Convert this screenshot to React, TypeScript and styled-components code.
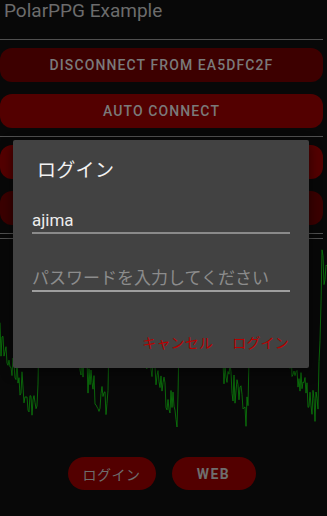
import styled, { createGlobalStyle } from "styled-components";

const GlobalStyle = createGlobalStyle`
  html, body {
    margin: 0;
    padding: 0;
    background: #080808;
  }
  body {
    width: 327px;
    height: 516px;
    overflow: hidden;
    font-family: Roboto, "Noto Sans CJK JP", sans-serif;
  }
`;

const JP = `Roboto, "Noto Sans CJK JP", sans-serif`;

function rand(seed: number) {
  let s = seed;
  return () => {
    s = (s * 16807) % 2147483647;
    return (s - 1) / 2147483646;
  };
}

// PPG-like trace: sharp rise after each trough, then a noisy decay
function buildWave(width: number) {
  const r = rand(7);
  const period = 70.3;
  const trough = 37;
  const peakY = 20;
  const lowY = 174;
  const pts: string[] = [];
  for (let x = 0; x <= width; x += 1) {
    const p = ((((x - trough) % period) + period) % period) / period;
    let y: number;
    if (p < 0.05) {
      y = lowY - (lowY - peakY) * (p / 0.05);
    } else {
      y = peakY + (lowY - peakY) * Math.pow((p - 0.05) / 0.95, 0.8);
    }
    y += (r() - 0.5) * 34;
    pts.push(`${x.toFixed(1)},${y.toFixed(1)}`);
  }
  return "M" + pts.join(" L");
}

const WAVE = buildWave(327);

export default function App() {
  return (
    <>
      <GlobalStyle />
      <Screen>
        <AppTitle>PolarPPG Example</AppTitle>
        <Divider />
        <ButtonStack>
          <WideButton shade="#3d0000">DISCONNECT FROM EA5DFC2F</WideButton>
          <WideButton shade="#530000">AUTO CONNECT</WideButton>
        </ButtonStack>
        <Divider />
        <ButtonStack>
          <WideButton shade="#530000">START PPG</WideButton>
          <WideButton shade="#3a0000">START ACC</WideButton>
        </ButtonStack>
        <Divider />
        <Divider $gap={4} />
        <Graph viewBox="0 0 327 208" width={327} height={208}>
          <path d={WAVE} fill="none" stroke="#0b7e0b" strokeWidth={0.8} />
        </Graph>
        <BottomRow>
          <PillButton>ログイン</PillButton>
          <PillButton $wide>WEB</PillButton>
        </BottomRow>

        <Dialog>
          <DialogTitle>ログイン</DialogTitle>
          <Field readOnly value="ajima" />
          <Field readOnly placeholder="パスワードを入力してください" $gap={32} $light />
          <Actions>
            <TextButton>キャンセル</TextButton>
            <TextButton>ログイン</TextButton>
          </Actions>
        </Dialog>
      </Screen>
    </>
  );
}

const Screen = styled.div`
  position: relative;
  width: 327px;
  height: 516px;
  display: flex;
  flex-direction: column;
  background: #080808;
`;

const AppTitle = styled.h1`
  margin: 0;
  height: 39px;
  padding: 1px 0 0 4px;
  box-sizing: border-box;
  font-family: Roboto, sans-serif;
  font-weight: 400;
  font-size: 19px;
  line-height: 20px;
  color: #6c6c6c;
`;

const Divider = styled.div<{ $gap?: number }>`
  width: 323px;
  height: 1px;
  margin-top: ${({ $gap }) => $gap ?? 0}px;
  background: #4f4f4f;
`;

const ButtonStack = styled.div`
  width: 323px;
  display: flex;
  flex-direction: column;
  gap: 12px;
  padding: 8px 0;
`;

const WideButton = styled.div<{ shade: string }>`
  height: 34px;
  border-radius: 12px;
  background: ${({ shade }) => shade};
  display: flex;
  justify-content: center;
  align-items: center;
  font-family: Roboto, sans-serif;
  font-weight: 500;
  font-size: 14px;
  letter-spacing: 1.1px;
  color: #7a7a7a;
`;

const Graph = styled.svg`
  display: block;
`;

const BottomRow = styled.div`
  width: 323px;
  display: flex;
  justify-content: center;
  gap: 16px;
  margin-top: 10px;
`;

const PillButton = styled.div<{ $wide?: boolean }>`
  height: 33px;
  width: ${({ $wide }) => ($wide ? 84 : 88)}px;
  border-radius: 17px;
  background: #530000;
  display: flex;
  justify-content: center;
  align-items: center;
  font-family: ${JP};
  font-weight: ${({ $wide }) => ($wide ? 700 : 400)};
  font-size: 14px;
  letter-spacing: ${({ $wide }) => ($wide ? 1.5 : 0.5)}px;
  color: #6e6e6e;
`;

const Dialog = styled.div`
  position: absolute;
  left: 13px;
  top: 140px;
  width: 296px;
  box-sizing: border-box;
  padding: 17px 19px 8px 19px;
  background: #424242;
  border-radius: 2px;
  display: flex;
  flex-direction: column;
  box-shadow: 0 4px 12px rgba(0, 0, 0, 0.5);
`;

const DialogTitle = styled.div`
  height: 28px;
  padding-left: 5px;
  font-family: ${JP};
  font-size: 19px;
  line-height: 28px;
  letter-spacing: 0.3px;
  color: #f2f2f2;
  margin-bottom: 23px;
`;

const Field = styled.input<{ $gap?: number; $light?: boolean }>`
  display: block;
  box-sizing: border-box;
  width: 258px;
  height: 26px;
  margin: ${({ $gap }) => $gap ?? 0}px 0 0 0;
  padding: 0 0 1px 0;
  border: none;
  border-bottom: 2px solid ${({ $light }) => ($light ? "#9e9e9e" : "#8a8a8a")};
  background: transparent;
  outline: none;
  font-family: ${JP};
  font-size: 17px;
  color: #ececec;

  &::placeholder {
    color: #8c8c8c;
  }
`;

const Actions = styled.div`
  height: 36px;
  margin-top: 32px;
  display: flex;
  justify-content: flex-end;
  align-items: center;
  gap: 19px;
  padding-right: 1px;
`;

const TextButton = styled.div`
  font-family: ${JP};
  font-size: 14px;
  letter-spacing: 0.2px;
  color: #b80000;
`;
